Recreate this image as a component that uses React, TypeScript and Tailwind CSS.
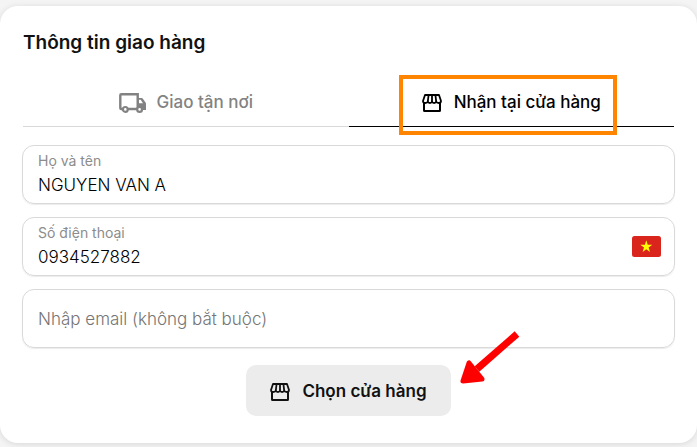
import { useState } from 'react';

type DeliveryMethod = 'shipping' | 'pickup';

function TruckIcon() {
  return (
    <svg width="28" height="20" viewBox="0 0 28 20" fill="none" aria-hidden="true">
      <path
        d="M3.5 16H2.300q-1 0-1-1V2.300q0-1 1-1H18.700V16H9"
        stroke="currentColor"
        strokeWidth="2.400"
      />
      <path
        fillRule="evenodd"
        fill="currentColor"
        d="M18 5h4.600q.7 0 1.100.6l3 4.200q.3.4.3 1V17H18zM19.900 6.800v3.400h4.100l-2.300-3.400z"
      />
      <circle cx="6.300" cy="16.400" r="2.400" fill="white" stroke="currentColor" strokeWidth="2.200" />
      <circle cx="20.600" cy="16.400" r="2.400" fill="white" stroke="currentColor" strokeWidth="2.200" />
    </svg>
  );
}

function StoreIcon() {
  return (
    <svg width="20" height="20" viewBox="0 0 20 20" fill="none" stroke="currentColor" aria-hidden="true">
      <path
        d="M3 2h14l2 6q0 2-2.200 2T14.200 8.400Q13.800 10 12.100 10T10 8.400Q9.600 10 7.900 10T5.800 8.400Q5.400 10 3.200 10T1 8z"
        strokeWidth="1.800"
        strokeLinejoin="round"
      />
      <path d="M6.600 2 5.800 8.500M10 2v6.500M13.400 2l.8 6.500" strokeWidth="1.800" />
      <path d="M2 10v7.500q0 .5.5.5h15q.5 0 .5-.5V10" strokeWidth="2" />
    </svg>
  );
}

function VietnamFlag() {
  return (
    <svg width="29" height="21" viewBox="0 0 29 21" role="img" aria-label="Việt Nam">
      <rect width="29" height="21" rx="2.500" fill="#da251d" />
      <path
        fill="#ffff00"
        d="M14.300 4.300 15.700 8.800H20.300l-3.700 2.700 1.400 4.500-3.700-2.800-3.700 2.800 1.400-4.500L8.300 8.800h4.600z"
      />
    </svg>
  );
}

const fieldClass =
  'flex h-[59px] items-center rounded-xl border border-[#d9d9d9] pr-[13px] pl-[15px] shadow-[0_1px_1px_rgba(0,0,0,0.08)] focus-within:border-gray-500';
const labelClass = 'block text-sm leading-5 text-[#8c8c8c]';
const inputClass = 'block h-7 w-full bg-transparent text-[17px] font-light text-black outline-none';

export default function App() {
  const [method, setMethod] = useState<DeliveryMethod>('pickup');
  const [name, setName] = useState('NGUYEN VAN A');
  const [phone, setPhone] = useState('0934527882');
  const [email, setEmail] = useState('');

  const tabClass = (active: boolean) =>
    active
      ? 'flex h-[50px] flex-1 items-center justify-center border-b border-black pt-[2px] text-black'
      : 'flex h-[50px] flex-1 items-center justify-center border-b border-[#d9d9d9] pt-[2px] text-[#828282]';

  return (
    <div className="bg-[#f4f4f4] pt-[6px] pb-1 font-['Inter','Noto_Sans',sans-serif]">
      <form
        className="rounded-[18px] bg-white px-[22px] pt-[23px] pb-[27px] shadow-[0_1px_6px_rgba(0,0,0,0.12)]"
        onSubmit={(e) => e.preventDefault()}
      >
        <h2 className="px-px text-[19px] leading-7 font-semibold text-[#111]">Thông tin giao hàng</h2>

        <div role="tablist" className="mt-5 flex px-px text-[17px] font-medium">
          <button
            type="button"
            role="tab"
            aria-selected={method === 'shipping'}
            className={tabClass(method === 'shipping')}
            onClick={() => setMethod('shipping')}
          >
            <span className="flex items-center gap-[10px]">
              <TruckIcon />
              Giao tận nơi
            </span>
          </button>
          <button
            type="button"
            role="tab"
            aria-selected={method === 'pickup'}
            className={tabClass(method === 'pickup')}
            onClick={() => setMethod('pickup')}
          >
            <span className="relative flex items-center gap-3">
              <StoreIcon />
              Nhận tại cửa hàng
              <span className="pointer-events-none absolute -top-[15px] -right-4 -bottom-5 -left-[23px] border-4 border-[#ff8400]" />
            </span>
          </button>
        </div>

        <div className="mt-[18px] flex flex-col gap-[13px]">
          <div className={fieldClass}>
            <div className="flex-1">
              <label htmlFor="name" className={labelClass}>Họ và tên</label>
              <input
                id="name"
                className={inputClass}
                value={name}
                onChange={(e) => setName(e.target.value)}
              />
            </div>
          </div>

          <div className={fieldClass}>
            <div className="flex-1">
              <label htmlFor="phone" className={labelClass}>Số điện thoại</label>
              <input
                id="phone"
                type="tel"
                className={inputClass}
                value={phone}
                onChange={(e) => setPhone(e.target.value)}
              />
            </div>
            <VietnamFlag />
          </div>

          <div className={fieldClass}>
            <input
              type="email"
              aria-label="Nhập email (không bắt buộc)"
              placeholder="Nhập email (không bắt buộc)"
              className="h-7 w-full bg-transparent text-[17px] font-light text-black outline-none placeholder:text-[#757575]"
              value={email}
              onChange={(e) => setEmail(e.target.value)}
            />
          </div>
        </div>

        <div className="mt-[17px] flex justify-center">
          <div className="relative">
            <button
              type="submit"
              className="flex h-[51px] items-center gap-3 rounded-[10px] bg-[#ececec] px-6 pt-[2px] text-[17px] font-semibold text-[#111]"
            >
              <StoreIcon />
              Chọn cửa hàng
            </button>
            <svg
              className="pointer-events-none absolute -top-[36px] left-full ml-2"
              width="62"
              height="58"
              viewBox="0 0 62 58"
              aria-hidden="true"
            >
              <path d="M58 5 18 40" stroke="#ff0000" strokeWidth="7" />
              <path
                d="M10 34 4 52 23 50z"
                fill="#ff0000"
                stroke="#ff0000"
                strokeWidth="5"
                strokeLinejoin="round"
              />
            </svg>
          </div>
        </div>
      </form>
    </div>
  );
}
